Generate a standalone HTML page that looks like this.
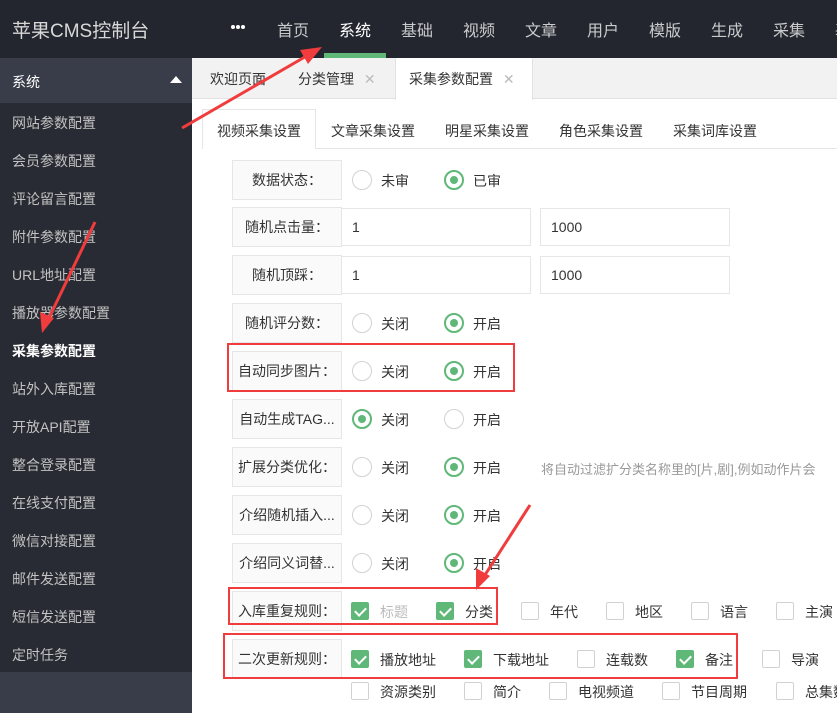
<!DOCTYPE html><html><head><meta charset="utf-8"><style>
*{margin:0;padding:0;box-sizing:border-box}
body{width:837px;height:713px;overflow:hidden;position:relative;background:#fff;font-family:"Liberation Sans","Noto Sans CJK SC",sans-serif;font-size:14px;color:#333}
.a{position:absolute;white-space:nowrap}
.hd{left:0;top:0;width:837px;height:58px;background:#23262e}
.nav{top:17px;font-size:16px;color:#c9cacc}
.sb{left:0;top:58px;width:192px;height:655px;background:#393d49}
.sbi{left:0;top:103px;width:192px;height:569px;background:#282b33}
.si{left:12px;font-size:14px;color:#c2c2c2}
.lbl{left:232px;width:110px;height:40px;background:#fafafa;border:1px solid #e6e6e6;line-height:38px;text-align:center;font-size:14px;color:#333}
.rad{width:20px;height:20px;border:1px solid #d2d2d2;border-radius:50%}
.rad.on{border:2px solid #5fb878}
.rad.on:after{content:"";position:absolute;left:4px;top:4px;width:8px;height:8px;border-radius:50%;background:#5fb878}
.cb{width:18px;height:18px;border:1px solid #d2d2d2;border-radius:2px}
.cb.on{background:#5fb878;border-color:#5fb878}
.cb.on:after{content:"";position:absolute;left:5px;top:2px;width:5px;height:9px;border:solid #fff;border-width:0 2px 2px 0;transform:rotate(45deg)}
.t{font-size:14px;color:#333}
.inp{height:38px;border:1px solid #e6e6e6;line-height:36px;padding-left:10px}
.box{border:2px solid #f03c3c}
.dot{width:4px;height:4px;border-radius:50%;background:#fff;top:25px}
</style></head><body>
<div class="a hd"></div>
<div class="a" style="left:12px;top:16px;font-size:19px;color:#d8d8d8">苹果CMS控制台</div>
<div class="a dot" style="left:231px"></div><div class="a dot" style="left:236px"></div><div class="a dot" style="left:241px"></div>
<div class="a nav" style="left:277px">首页</div>
<div class="a nav" style="left:339px;color:#fff">系统</div>
<div class="a" style="left:324px;top:53px;width:62px;height:5px;background:#5fb878"></div>
<div class="a nav" style="left:401px">基础</div>
<div class="a nav" style="left:463px">视频</div>
<div class="a nav" style="left:525px">文章</div>
<div class="a nav" style="left:587px">用户</div>
<div class="a nav" style="left:649px">模版</div>
<div class="a nav" style="left:711px">生成</div>
<div class="a nav" style="left:773px">采集</div>
<div class="a nav" style="left:835px">基</div>
<div class="a sb"></div><div class="a sbi"></div>
<div class="a si" style="top:72px;color:#fff">系统</div>
<div class="a" style="left:170px;top:76px;width:0;height:0;border-left:6px solid transparent;border-right:6px solid transparent;border-bottom:7px solid #fff"></div>
<div class="a si" style="top:113px">网站参数配置</div>
<div class="a si" style="top:151px">会员参数配置</div>
<div class="a si" style="top:189px">评论留言配置</div>
<div class="a si" style="top:227px">附件参数配置</div>
<div class="a si" style="top:265px">URL地址配置</div>
<div class="a si" style="top:303px">播放器参数配置</div>
<div class="a si" style="top:341px;color:#fff;font-weight:bold">采集参数配置</div>
<div class="a si" style="top:379px">站外入库配置</div>
<div class="a si" style="top:417px">开放API配置</div>
<div class="a si" style="top:455px">整合登录配置</div>
<div class="a si" style="top:493px">在线支付配置</div>
<div class="a si" style="top:531px">微信对接配置</div>
<div class="a si" style="top:569px">邮件发送配置</div>
<div class="a si" style="top:607px">短信发送配置</div>
<div class="a si" style="top:645px">定时任务</div>
<div class="a" style="left:192px;top:58px;width:645px;height:41px;background:#f2f2f2;border-bottom:1px solid #e2e2e2"></div>
<div class="a t" style="left:210px;top:69px">欢迎页面</div>
<div class="a t" style="left:298px;top:69px">分类管理 <span style="color:#bbb;margin-left:6px">✕</span></div>
<div class="a" style="left:395px;top:58px;width:138px;height:42px;background:#fff;border-left:1px solid #e2e2e2;border-right:1px solid #e2e2e2"></div>
<div class="a t" style="left:409px;top:69px">采集参数配置 <span style="color:#bbb;margin-left:6px">✕</span></div>
<div class="a" style="left:202px;top:148px;width:635px;height:1px;background:#e6e6e6"></div>
<div class="a" style="left:202px;top:109px;width:114px;height:40px;background:#fff;border:1px solid #e6e6e6;border-bottom:none"></div>
<div class="a t" style="left:217px;top:121px">视频采集设置</div>
<div class="a t" style="left:331px;top:121px">文章采集设置</div>
<div class="a t" style="left:445px;top:121px">明星采集设置</div>
<div class="a t" style="left:559px;top:121px">角色采集设置</div>
<div class="a t" style="left:673px;top:121px">采集词库设置</div>

<div class="a lbl" style="top:160px">数据状态：</div>
<div class="a rad" style="left:352px;top:170px"></div><div class="a t" style="left:381px;top:171px">未审</div>
<div class="a rad on" style="left:444px;top:170px"></div><div class="a t" style="left:473px;top:171px">已审</div>

<div class="a lbl" style="top:207px">随机点击量：</div>
<div class="a inp" style="left:341px;top:208px;width:190px">1</div>
<div class="a inp" style="left:540px;top:208px;width:190px">1000</div>
<div class="a lbl" style="top:255px">随机顶踩：</div>
<div class="a inp" style="left:341px;top:256px;width:190px">1</div>
<div class="a inp" style="left:540px;top:256px;width:190px">1000</div>

<div class="a lbl" style="top:303px">随机评分数：</div>
<div class="a rad" style="left:352px;top:313px"></div><div class="a t" style="left:381px;top:314px">关闭</div>
<div class="a rad on" style="left:444px;top:313px"></div><div class="a t" style="left:473px;top:314px">开启</div>

<div class="a lbl" style="top:351px">自动同步图片：</div>
<div class="a rad" style="left:352px;top:361px"></div><div class="a t" style="left:381px;top:362px">关闭</div>
<div class="a rad on" style="left:444px;top:361px"></div><div class="a t" style="left:473px;top:362px">开启</div>
<div class="a box" style="left:227px;top:343px;width:288px;height:49px"></div>

<div class="a lbl" style="top:399px">自动生成TAG...</div>
<div class="a rad on" style="left:352px;top:409px"></div><div class="a t" style="left:381px;top:410px">关闭</div>
<div class="a rad" style="left:444px;top:409px"></div><div class="a t" style="left:473px;top:410px">开启</div>

<div class="a lbl" style="top:447px">扩展分类优化：</div>
<div class="a rad" style="left:352px;top:457px"></div><div class="a t" style="left:381px;top:458px">关闭</div>
<div class="a rad on" style="left:444px;top:457px"></div><div class="a t" style="left:473px;top:458px">开启</div>
<div class="a" style="left:541px;top:459px;color:#999;font-size:13px">将自动过滤扩分类名称里的[片,剧],例如动作片会</div>

<div class="a lbl" style="top:495px">介绍随机插入...</div>
<div class="a rad" style="left:352px;top:505px"></div><div class="a t" style="left:381px;top:506px">关闭</div>
<div class="a rad on" style="left:444px;top:505px"></div><div class="a t" style="left:473px;top:506px">开启</div>

<div class="a lbl" style="top:543px">介绍同义词替...</div>
<div class="a rad" style="left:352px;top:553px"></div><div class="a t" style="left:381px;top:554px">关闭</div>
<div class="a rad on" style="left:444px;top:553px"></div><div class="a t" style="left:473px;top:554px">开启</div>

<div class="a lbl" style="top:591px">入库重复规则：</div>
<div class="a cb on" style="left:351px;top:602px"></div><div class="a t" style="left:380px;top:602px;color:#bbb">标题</div>
<div class="a cb on" style="left:436px;top:602px"></div><div class="a t" style="left:465px;top:602px">分类</div>
<div class="a cb" style="left:521px;top:602px"></div><div class="a t" style="left:550px;top:602px">年代</div>
<div class="a cb" style="left:606px;top:602px"></div><div class="a t" style="left:635px;top:602px">地区</div>
<div class="a cb" style="left:691px;top:602px"></div><div class="a t" style="left:720px;top:602px">语言</div>
<div class="a cb" style="left:776px;top:602px"></div><div class="a t" style="left:805px;top:602px">主演</div>
<div class="a box" style="left:228px;top:587px;width:270px;height:38px"></div>

<div class="a lbl" style="top:639px">二次更新规则：</div>
<div class="a cb on" style="left:351px;top:650px"></div><div class="a t" style="left:380px;top:650px">播放地址</div>
<div class="a cb on" style="left:464px;top:650px"></div><div class="a t" style="left:493px;top:650px">下载地址</div>
<div class="a cb" style="left:577px;top:650px"></div><div class="a t" style="left:606px;top:650px">连载数</div>
<div class="a cb on" style="left:676px;top:650px"></div><div class="a t" style="left:705px;top:650px">备注</div>
<div class="a cb" style="left:762px;top:650px"></div><div class="a t" style="left:791px;top:650px">导演</div>
<div class="a box" style="left:223px;top:633px;width:515px;height:46px"></div>
<div class="a cb" style="left:351px;top:682px"></div><div class="a t" style="left:380px;top:682px">资源类别</div>
<div class="a cb" style="left:464px;top:682px"></div><div class="a t" style="left:493px;top:682px">简介</div>
<div class="a cb" style="left:549px;top:682px"></div><div class="a t" style="left:578px;top:682px">电视频道</div>
<div class="a cb" style="left:662px;top:682px"></div><div class="a t" style="left:691px;top:682px">节目周期</div>
<div class="a cb" style="left:776px;top:682px"></div><div class="a t" style="left:805px;top:682px">总集数</div>

<svg class="a" style="left:0;top:0" width="837" height="713">
<g stroke="#f03c3c" stroke-width="3" fill="#f03c3c">
<line x1="182" y1="128" x2="310" y2="54"/><polygon points="322,47 300,50 308,64" stroke="none"/>
<line x1="95" y1="222" x2="48" y2="320"/><polygon points="42,333 40,312 54,318" stroke="none"/>
<line x1="530" y1="505" x2="483" y2="578"/><polygon points="476,590 476,568 490,576" stroke="none"/>
</g></svg>
</body></html>
